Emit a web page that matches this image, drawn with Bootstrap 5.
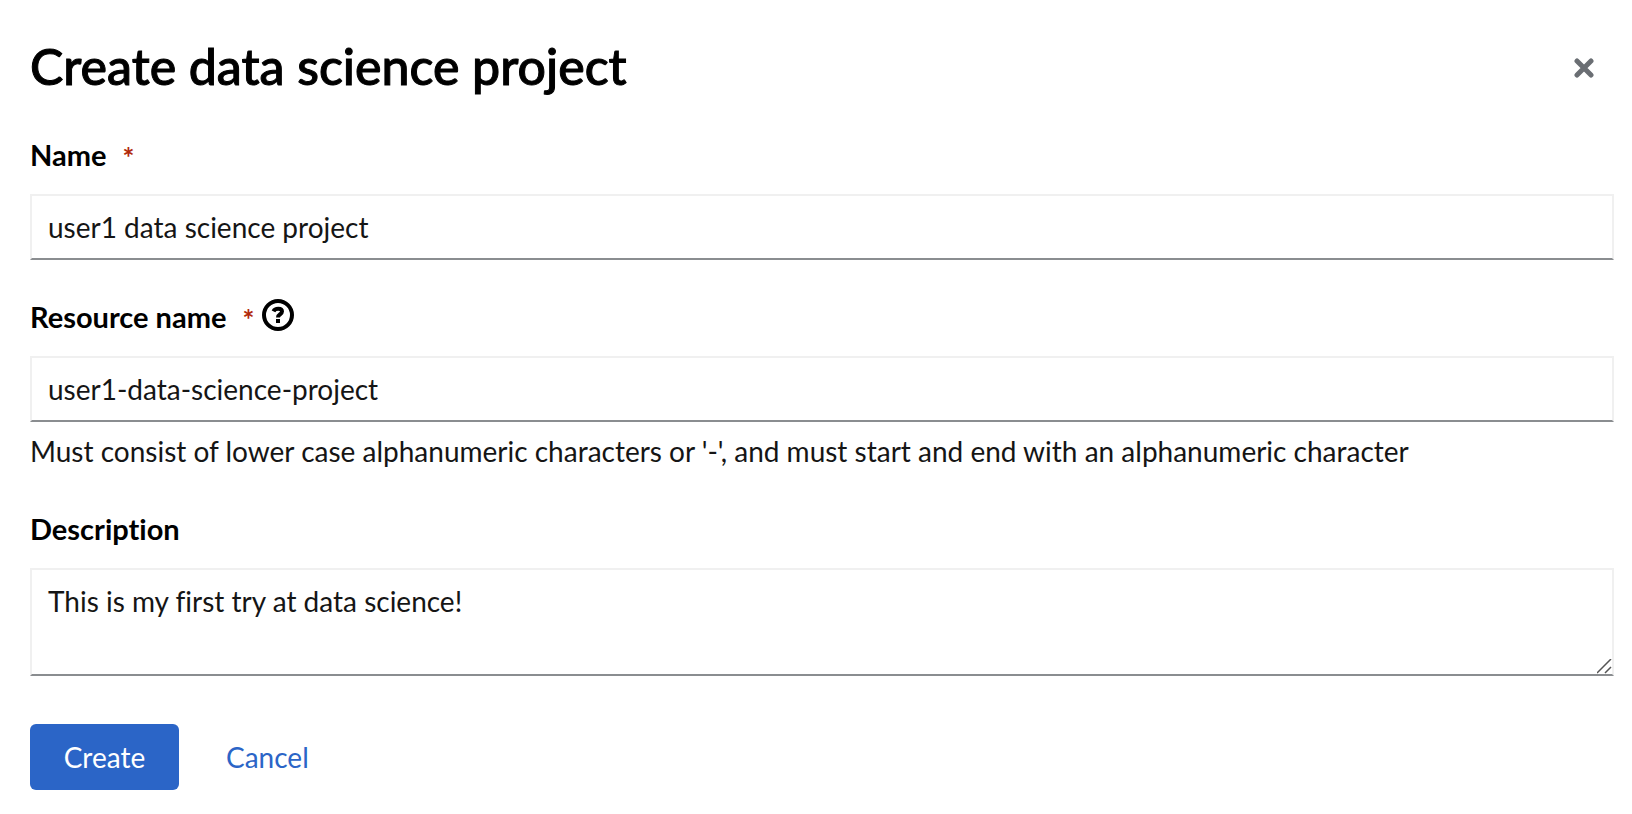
<!DOCTYPE html>
<html lang="en">
<head>
<meta charset="utf-8">
<meta name="viewport" content="width=device-width, initial-scale=1">
<title>Create data science project</title>
<link href="https://cdn.jsdelivr.net/npm/bootstrap@5.3.0/dist/css/bootstrap.min.css" rel="stylesheet">
<style>
  body { font-family: Lato, "Liberation Sans", sans-serif; font-size: 28px; line-height: 42px; font-variant-ligatures: none; color: #151515; background: #fff; }
  .project-dialog { padding: 34px 18px 24px 30px; }
  .dialog-title { font-size: 50px; line-height: 64px; font-weight: 500; color: #000; -webkit-text-stroke: 1px #000; }
  .close-btn { width: 60px; height: 60px; color: #6a6e73; }
  .dialog-head, .field { margin-bottom: 36px; }
  .field-last { margin-bottom: 48px; }
  .field-head { margin-bottom: 18px; gap: 8px; }
  .form-label { font-size: 29px; font-weight: 700; color: #000; }
  .required-mark { margin-left: 16px; font-size: 28px; line-height: 1; vertical-align: -2px; color: #b1290b; }
  .help-btn { width: 32px; height: 32px; margin-bottom: 4px; color: #000; }
  .form-control, .form-control:focus {
    font-size: 28px; line-height: 42px; color: #151515; background: #fff; font-variant-ligatures: none;
    padding: 10px 16px; border: 2px solid #f0f0f0; border-bottom-color: #8a8d90;
    border-radius: 0; box-shadow: none;
  }
  textarea.form-control { height: 108px; resize: vertical; }
  textarea::-webkit-resizer {
    background: url("data:image/svg+xml,%3Csvg xmlns='http://www.w3.org/2000/svg' viewBox='0 0 15 15'%3E%3Cpath d='M0 14 14 0M8 14l6-6' stroke='%23555' stroke-width='1.5' fill='none'/%3E%3C/svg%3E") center / 15px 15px no-repeat;
  }
  .form-text { font-size: 28px; margin-top: 8px; color: #151515; }
  .dialog-actions { gap: 14px; }
  .dialog-actions .btn { font-size: 28px; line-height: 42px; padding: 12px 33px; border: 0; border-radius: 6px; }
  .btn-primary { --bs-btn-bg: #2b65c7; --bs-btn-hover-bg: #1f4f9f; min-width: 149px; }
  .dialog-actions .btn-link { color: #2b65c7; text-decoration: none; }
</style>
</head>
<body>
<main class="project-dialog" role="dialog" aria-labelledby="dialog-title">
  <header class="dialog-head d-flex align-items-center justify-content-between">
    <h1 class="dialog-title mb-0" id="dialog-title">Create data science project</h1>
    <button type="button" class="close-btn btn border-0 p-0 pt-1 d-flex align-items-center justify-content-center" aria-label="Close">
      <svg width="20" height="20" viewBox="0 0 20 20" fill="none" stroke="currentColor" stroke-width="5" stroke-linecap="round" aria-hidden="true"><path d="M3 3l14 14M17 3 3 17"/></svg>
    </button>
  </header>
  <form>
    <div class="field">
      <div class="field-head d-flex align-items-center">
        <label class="form-label mb-0" for="name">Name<span class="required-mark">*</span></label>
      </div>
      <input class="form-control" id="name" type="text" value="user1 data science project" required>
    </div>
    <div class="field">
      <div class="field-head d-flex align-items-center">
        <label class="form-label mb-0" for="resource">Resource name<span class="required-mark">*</span></label>
        <button type="button" class="help-btn btn border-0 p-0 d-flex" aria-label="More info about the resource name">
          <svg width="32" height="32" viewBox="0 0 32 32" fill="none" stroke="currentColor" stroke-width="4" aria-hidden="true"><circle cx="16" cy="16" r="14"/><path d="M11.500 12.300C13 9 20 8.800 20 12.500c0 3-4 2.500-4 6"/><path d="M14 22h4"/></svg>
        </button>
      </div>
      <input class="form-control" id="resource" type="text" value="user1-data-science-project" aria-describedby="resource-hint" required>
      <div class="form-text" id="resource-hint">Must consist of lower case alphanumeric characters or '-', and must start and end with an alphanumeric character</div>
    </div>
    <div class="field field-last">
      <div class="field-head d-flex align-items-center">
        <label class="form-label mb-0" for="description">Description</label>
      </div>
      <textarea class="form-control" id="description" rows="2">This is my first try at data science!</textarea>
    </div>
    <div class="dialog-actions d-flex">
      <button type="submit" class="btn btn-primary">Create</button>
      <button type="button" class="btn btn-link">Cancel</button>
    </div>
  </form>
</main>
<script src="https://cdn.jsdelivr.net/npm/bootstrap@5.3.0/dist/js/bootstrap.bundle.min.js"></script>
</body>
</html>
